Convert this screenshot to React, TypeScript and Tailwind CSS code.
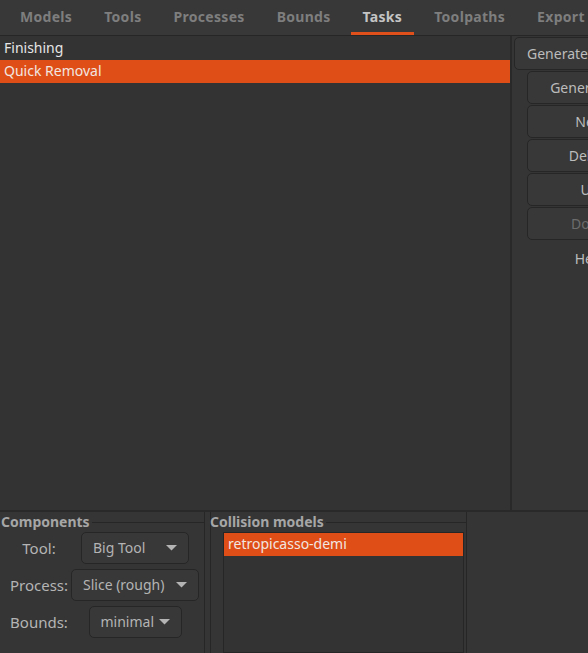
import React from "react";

const font = { fontFamily: '"Noto Sans", "Open Sans", "DejaVu Sans", sans-serif' };

function Combo({ label, w }: { label: string; w: string }) {
  return (
    <div className={"flex h-[32px] shrink-0 items-center justify-between rounded-[5px] border border-[#262626] bg-[#383838] px-[11px] text-[#b4b4b4] " + w}>
      <span className="whitespace-nowrap">{label}</span>
      <svg width="11" height="6" viewBox="0 0 11 6" className="shrink-0"><path d="M0 0h11L5.5 5.5z" fill="#b4b4b4" /></svg>
    </div>
  );
}

export default function App() {
  const tabs = ["Models", "Tools", "Processes", "Bounds", "Tasks", "Toolpaths", "Export Settings"];
  return (
    <div style={font} className="flex h-[653px] w-[588px] flex-col overflow-hidden bg-[#353535] text-[14px] leading-[20px]">
      <div className="flex h-[36px] shrink-0 border-b border-[#262626] bg-[#383838] pl-[4px] text-[14px] font-bold tracking-[0.3px]">
        {tabs.map((t) => (
          <div key={t} className="flex px-[4px]">
            <div
              className={
                "flex items-center whitespace-nowrap border-b-[3px] px-[12px] pt-[2px] " +
                (t === "Tasks" ? "border-[#e0501a] text-[#c4c4c4]" : "border-transparent text-[#7e7e7e]")
              }
            >
              {t}
            </div>
          </div>
        ))}
      </div>
      <div className="flex h-[475px] shrink-0 border-b border-[#292929]">
        <div className="flex-1 border-r-2 border-[#292929] bg-[#333333] pt-[1px] text-[#e6e6e6]">
          <div className="h-[23px] pl-[4px] pt-[1px]">Finishing</div>
          <div className="h-[23px] bg-[#df4e17] pl-[4px] pt-[1px] text-[#f2e6e0]">Quick Removal</div>
        </div>
        <div className="w-[76px] shrink-0 overflow-hidden pt-[1px]">
          <div className="w-[140px] text-[#bcbcbc]">
            <div className="ml-[2px] flex h-[33px] items-center rounded-[5px] border border-[#262626] bg-[#383838] pl-[12px]">
              Generate Toolpath
            </div>
            <div className="ml-[15px] flex w-[126px] flex-col gap-[1px] pt-[1px]">
              {["Generate all", "New", "Delete", "Up", "Down"].map((b) => (
                <div
                  key={b}
                  className={
                    "flex h-[33px] items-center justify-center rounded-[5px] border border-[#262626] bg-[#383838] " +
                    (b === "Down" ? "text-[#6c6c6c]" : "")
                  }
                >
                  {b}
                </div>
              ))}
              <div className="flex h-[36px] items-center justify-center">Help</div>
            </div>
          </div>
        </div>
      </div>
      <div className="flex flex-1 gap-[5px] border-t border-[#292929]">
        <fieldset className="relative -ml-[2px] w-[207px] border border-t-0 border-[#262626]">
          <div className="flex items-center">
            <span className="pl-[2px] text-[14px] font-bold text-[#a6a6a6]">Components</span>
            <div className="ml-[2px] h-px flex-1 bg-[#262626]" />
          </div>
          <div className="grid grid-cols-[80px_112px] items-center gap-y-[5px] text-[#b4b4b4]">
            <div className="text-center text-[15px]">Tool:</div>
            <div className="flex justify-center"><Combo label="Big Tool" w="w-[108px]" /></div>
            <div className="text-center text-[15px]">Process:</div>
            <div className="flex justify-center"><Combo label="Slice (rough)" w="w-[128px]" /></div>
            <div className="text-center text-[15px]">Bounds:</div>
            <div className="flex justify-center"><Combo label="minimal" w="w-[93px]" /></div>
          </div>
        </fieldset>
        <fieldset className="flex w-[257px] flex-col border border-t-0 border-[#262626]">
          <div className="-ml-[1px] flex items-center">
            <span className="text-[14px] font-bold text-[#a6a6a6]">Collision models</span>
            <div className="ml-[2px] h-px flex-1 bg-[#262626]" />
          </div>
          <div className="ml-[12px] mr-[2px] h-[121px] border border-[#262626] bg-[#333333]">
            <div className="h-[23px] bg-[#df4e17] pl-[4px] pt-[1px] text-[#f2e6e0]">retropicasso-demi</div>
          </div>
        </fieldset>
      </div>
    </div>
  );
}
